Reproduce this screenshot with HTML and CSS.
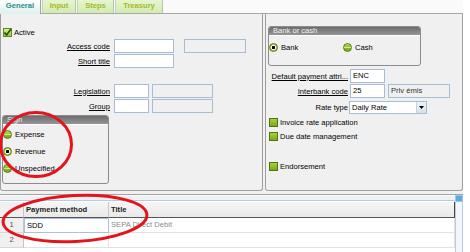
FILE: index.html
```html
<!DOCTYPE html>
<html lang="en">
<head>
    <meta charset="UTF-8">
    <title>Payment method</title>
    <link rel="stylesheet" href="styles.css">
</head>
<body>
<div class="window">
    <div class="tabs">
        <div class="tab active">General</div>
        <div class="tab t-input">Input</div>
        <div class="tab t-steps">Steps</div>
        <div class="tab t-treasury">Treasury</div>
    </div>

    <div class="main">
        <div class="panel left">
            <div class="check-row active-row">
                <span class="box on"><svg width="9" height="9" viewBox="0 0 9 9"><path d="M1.5 4.5 L3.6 7 L7.8 1.3" fill="none" stroke="#1d5200" stroke-width="1.7"/></svg></span>
                Active
            </div>
            <div class="row r-first">
                <span class="lbl u">Access code</span>
                <span class="field w60"></span>
                <span class="field ro w62 gap10"></span>
            </div>
            <div class="row">
                <span class="lbl u">Short title</span>
                <span class="field w60"></span>
            </div>
            <div class="row r-leg">
                <span class="lbl u">Legislation</span>
                <span class="field w35"></span>
                <span class="field ro w61 gap3"></span>
            </div>
            <div class="row">
                <span class="lbl u">Group</span>
                <span class="field w35"></span>
                <span class="field ro w61 gap3"></span>
            </div>
            <div class="gbox sign">
                <div class="gbox-head">Sign</div>
                <div class="gbox-body">
                    <div class="radio-row"><span class="radio"></span>Expense</div>
                    <div class="radio-row"><span class="radio sel"></span>Revenue</div>
                    <div class="radio-row"><span class="radio"></span>Unspecified</div>
                </div>
            </div>
        </div>

        <div class="panel right">
            <div class="gbox bank">
                <div class="gbox-head">Bank or cash</div>
                <div class="gbox-body bank-body">
                    <div class="radio-row bank-opt"><span class="radio sel"></span>Bank</div>
                    <div class="radio-row"><span class="radio"></span>Cash</div>
                </div>
            </div>
            <div class="row r-default">
                <span class="lbl2 u">Default payment attri...</span>
                <span class="field w35">ENC</span>
            </div>
            <div class="row">
                <span class="lbl2 u">Interbank code</span>
                <span class="field w35">25</span>
                <span class="field ro w62 gap3">Prlv émis</span>
            </div>
            <div class="row r-rate">
                <span class="lbl2">Rate type</span>
                <span class="select">Daily Rate<span class="drop"><svg width="5" height="3" viewBox="0 0 5 3"><path d="M0 0 H5 L2.5 3 Z" fill="#000"/></svg></span></span>
            </div>
            <div class="check-row c-invoice"><span class="box"></span>Invoice rate application</div>
            <div class="check-row"><span class="box"></span>Due date management</div>
            <div class="check-row c-endorse"><span class="box"></span>Endorsement</div>
        </div>
    </div>

    <div class="sep"></div>

    <div class="grid-wrap">
        <div class="grid">
            <div class="cell num head"></div>
            <div class="cell head">Payment method</div>
            <div class="cell head last">Title</div>

            <div class="cell num">1</div>
            <div class="cell edit">SDD</div>
            <div class="cell dim">SEPA Direct Debit</div>

            <div class="cell num">2</div>
            <div class="cell"></div>
            <div class="cell"></div>
        </div>
        <div class="scroll"><span class="corner"></span></div>
    </div>

    <!-- red marks drawn over the screenshot -->
    <svg class="marks" width="470" height="252" viewBox="0 0 470 252">
        <ellipse cx="36" cy="144.5" rx="35.5" ry="32" fill="none" stroke="#e3141c" stroke-width="3"/>
        <ellipse cx="75" cy="218.5" rx="72" ry="23" fill="none" stroke="#e3141c" stroke-width="3" transform="rotate(-3 75 218.5)"/>
    </svg>
</div>
</body>
</html>
```

FILE: styles.css
```css
body {
    margin: 0;
    background: #fff;
    font-family: "Liberation Sans", Arial, sans-serif;
    font-size: 7.6px;
    color: #000;
}
.window {
    position: relative;
    width: 463px;
    height: 252px;
    overflow: hidden;
    background: #f0f0f0;
}

/* tabs */
.tabs {
    display: flex;
    height: 13px;
    background: #fafafa;
    border-bottom: 1px solid #a8a8a8;
}
.tab {
    height: 13px;
    line-height: 12px;
    text-align: center;
    font-weight: bold;
    color: #a5b92a;
    background: linear-gradient(#e6f5d0, #d3ecb0);
    border-left: 1px solid #c6d2bc;
    border-right: 1px solid #b8c4ae;
    margin-right: 1px;
    box-sizing: border-box;
}
.tab.active {
    width: 41px;
    color: #2b8c88;
    border-left: none;
    background: linear-gradient(#ffffff, #ddf0ec);
    border-right: 1px solid #a0a0a0;
    height: 14px;
}
.t-input { width: 34px; }
.t-steps { width: 37px; }
.t-treasury { width: 48px; }

/* top panels */
.main {
    display: flex;
    gap: 2px;
    height: 177px;
}
.panel {
    border: 1px solid #a0a0a0;
    border-top: none;
    border-radius: 0 0 3px 3px;
    box-sizing: border-box;
}
.left { width: 263px; }
.right { width: 198px; }

.row {
    display: flex;
    align-items: center;
    height: 14px;
    margin-top: 1px;
}
.lbl {
    width: 109px;
    margin-right: 4px;
    text-align: right;
    white-space: nowrap;
}
.lbl2 {
    width: 82px;
    margin-right: 2px;
    text-align: right;
    white-space: nowrap;
}
.u { text-decoration: underline; }

.field {
    height: 14px;
    line-height: 12px;
    padding-left: 2px;
    box-sizing: border-box;
    border: 1px solid #a7bdd6;
    background: #fff;
}
.field.ro { background: #f0f0f0; color: #333; }
.w35 { width: 35px; }
.w60 { width: 60px; }
.w61 { width: 61px; }
.w62 { width: 62px; }
.gap3 { margin-left: 3px; }
.gap10 { margin-left: 10px; }

.r-first { margin-top: 2px; }
.r-leg { margin-top: 16px; }
.r-default { margin-top: 3px; }
.r-rate { margin-top: 2px; }

.select {
    position: relative;
    width: 78px;
    height: 13px;
    line-height: 11px;
    padding-left: 2px;
    margin-left: -1px;
    box-sizing: border-box;
    border: 1px solid #a7bdd6;
    background: #fff;
}
.drop {
    position: absolute;
    right: 0;
    top: 0;
    width: 9px;
    height: 11px;
    display: flex;
    align-items: center;
    justify-content: center;
    background: linear-gradient(#eef4f6, #d4e2e6);
    border-left: 1px solid #c4d4dc;
}

/* check boxes */
.check-row {
    display: flex;
    align-items: center;
    height: 9px;
    margin-left: 3px;
    margin-top: 5px;
}
.active-row {
    margin-left: 2px;
    margin-top: 13px;
    height: 10px;
}
.box {
    width: 9px;
    height: 9px;
    margin-right: 2px;
    box-sizing: border-box;
    border: 1px solid #4f7410;
    background: linear-gradient(#a8d23a, #7ba818);
}
.box.on {
    background: linear-gradient(#d6ef9a, #9cc83a);
    border-color: #5f8a20;
}
.box svg { display: block; margin: -1px; }
.c-invoice { margin-top: 4px; }
.c-endorse { margin-top: 21px; }

/* group boxes */
.gbox {
    border: 1px solid #8c8c8c;
    border-radius: 3px;
    background: #f0f0f0;
    box-sizing: border-box;
    overflow: hidden;
}
.gbox-head {
    height: 8px;
    line-height: 8px;
    padding-left: 4px;
    color: #f2f2f2;
    background: linear-gradient(#6c6c6c, #969696);
}
.gbox-body {
    border-top: 1px solid #fff;
}
.sign {
    width: 107px;
    height: 69px;
    margin: 2px 0 0 1px;
}
.sign .gbox-body { padding-top: 4px; }
.sign .radio-row { margin-bottom: 7px; }
.bank {
    width: 153px;
    height: 40px;
    margin: 12px 0 0 2px;
}
.bank-body {
    display: flex;
    padding: 6px 0 0 0;
}

.radio-row {
    display: flex;
    align-items: center;
    height: 10px;
}
.bank-body .bank-opt { width: 74px; }
.radio {
    width: 9px;
    height: 9px;
    margin-right: 3px;
    border-radius: 50%;
    box-sizing: border-box;
    border: 1px solid #5b7d14;
    background: linear-gradient(#b8dc5a 0%, #98c430 40%, #d2ea8e 50%, #8cb82a 60%, #7aa41c 100%);
}
.radio.sel {
    background: radial-gradient(circle, #000 0 1.4px, #fff 1.6px 2.4px, #9ccc34 2.7px);
}

/* bottom grid */
.sep {
    margin-top: 3px;
    border-top: 1px solid #a4a4a4;
    border-bottom: 1px solid #fafafa;
}
.grid-wrap {
    display: flex;
    margin-top: 4px;
    border-top: 1px solid #b2cde4;
    height: 60px;
}
.grid {
    width: 457px;
    display: grid;
    grid-template-columns: 24px 85px 1fr;
    grid-template-rows: 17px 15px 15px;
    background: #fff;
    align-content: start;
}
.cell {
    border-right: 1px solid #e2e2e2;
    border-bottom: 1px solid #e2e2e2;
    line-height: 14px;
    padding-left: 2px;
    white-space: nowrap;
    box-sizing: border-box;
}
.cell.head {
    height: 16px;
    line-height: 15px;
    font-weight: bold;
    color: #222;
    background: linear-gradient(#f6f6f6, #e9e9e9);
    border-right: 1px solid #c8c8c8;
    border-bottom: 1px solid #555;
    margin-top: 1px;
}
.cell.head.last { border-right: 1px solid #444; }
.cell.num {
    padding: 0;
    text-align: center;
    color: #555;
    background: #f0f0f0;
    border-right: 1px solid #c4c4c4;
    border-bottom: 1px solid #d8d8d8;
}
.cell.num.head { border-bottom: 1px solid #555; }
.cell.edit { border: 1px solid #a9c3de; }
.cell.dim { color: #8a8a8a; }

.scroll {
    position: relative;
    width: 6px;
    background: #f4f8fc;
    border-left: 1px solid #b2cde4;
    border-right: 1px solid #b2cde4;
}
.corner {
    position: absolute;
    left: -1px;
    top: -6px;
    width: 6px;
    height: 5px;
    background: #5fa8de;
    border: 1px solid #9ccaf0;
}

.marks {
    position: absolute;
    left: 0;
    top: 0;
    pointer-events: none;
}
```
